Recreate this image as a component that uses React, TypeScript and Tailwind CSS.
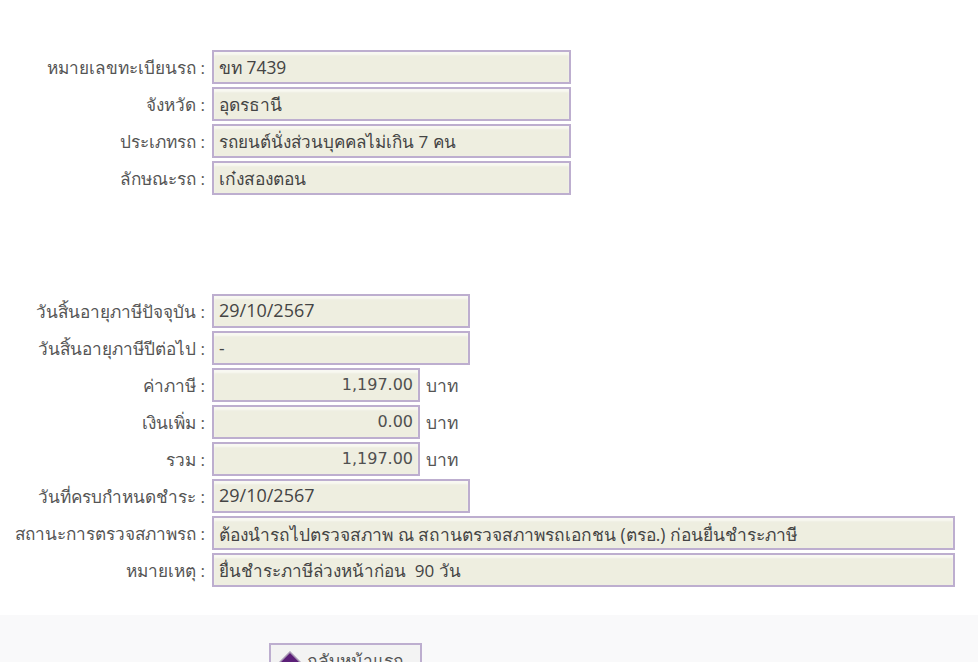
const VEHICLE = [
  { label: 'หมายเลขทะเบียนรถ', value: 'ขท 7439', size: 'text-[17.4px]' },
  { label: 'จังหวัด', value: 'อุดรธานี', size: 'text-[17.4px]' },
  { label: 'ประเภทรถ', value: 'รถยนต์นั่งส่วนบุคคลไม่เกิน 7 คน', size: 'text-[17.1px]' },
  { label: 'ลักษณะรถ', value: 'เก๋งสองตอน', size: 'text-[17.4px]' },
];

function Label({ text }: { text: string }) {
  return <span className="w-[205px] shrink-0 pt-[1px] text-right text-[17.2px] text-[#555555] whitespace-nowrap">{text} :</span>;
}

function Field({ value, className }: { value: string; className: string }) {
  return (
    <div className={`flex h-[34px] items-center border-2 border-[#bdaecf] bg-[#eeeee0] px-[5px] text-[#444444] whitespace-pre shadow-[inset_0_3px_2px_#f8f8f2] ${className}`}>
      {value}
    </div>
  );
}

function Row({ label, value, className }: { label: string; value: string; className: string }) {
  return (
    <div className="flex h-[34px] items-center gap-[7px]">
      <Label text={label} />
      <Field value={value} className={className} />
    </div>
  );
}

function Amount({ label, value }: { label: string; value: string }) {
  return (
    <div className="flex h-[34px] items-center gap-[7px]">
      <Label text={label} />
      <Field value={value} className="w-[208px] justify-end font-['DejaVu_Sans',sans-serif] text-[16px] text-[#505050]" />
      <span className="ml-[-1px] text-[#555555]">บาท</span>
    </div>
  );
}

export default function App() {
  return (
    <div className="h-[662px] overflow-hidden bg-white font-['Open_Sans','Noto_Sans',sans-serif] text-[17.4px]">
      <div className="flex flex-col gap-[3px] pt-[50px]">
        {VEHICLE.map((row) => (
          <Row key={row.label} label={row.label} value={row.value} className={`w-[359px] pt-[1px] ${row.size}`} />
        ))}
      </div>

      <div className="mt-[99px] flex flex-col gap-[3px]">
        <Row label="วันสิ้นอายุภาษีปัจจุบัน" value="29/10/2567" className="w-[258px] pb-[2px] text-[18px]" />
        <Row label="วันสิ้นอายุภาษีปีต่อไป" value="-" className="w-[258px] pt-[1px]" />
        <Amount label="ค่าภาษี" value="1,197.00" />
        <Amount label="เงินเพิ่ม" value="0.00" />
        <Amount label="รวม" value="1,197.00" />
        <Row label="วันที่ครบกำหนดชำระ" value="29/10/2567" className="w-[258px] pb-[2px] text-[18px]" />
        <Row label="สถานะการตรวจสภาพรถ" value="ต้องนำรถไปตรวจสภาพ ณ สถานตรวจสภาพรถเอกชน (ตรอ.) ก่อนยื่นชำระภาษี" className="w-[743px] pt-[2px]" />
        <Row label="หมายเหตุ" value="ยื่นชำระภาษีล่วงหน้าก่อน  90 วัน" className="w-[743px] pt-[2px] text-[17.05px]" />
      </div>

      <div className="mt-[28px] h-[60px] bg-[#f9f9fa] pl-[269px] pt-[28px]">
        <button className="flex h-[40px] w-[153px] items-start gap-[6px] border-2 border-[#bdaecf] bg-[#f3f3f3] pl-[8px] pt-[2px] text-[#555555]">
          <svg width="22" height="22" viewBox="0 0 22 22" className="mt-[4px]">
            <path d="M11 1 21 11 11 21 1 11Z" fill="#5b1f78" stroke="#a99ab5" strokeWidth="1.5" />
          </svg>
          <span>กลับหน้าแรก</span>
        </button>
      </div>
    </div>
  );
}
